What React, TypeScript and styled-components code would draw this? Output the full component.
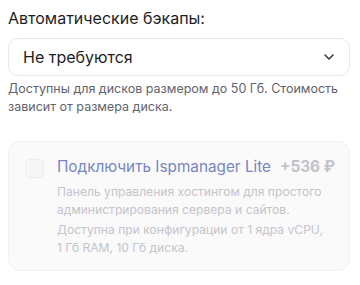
import React from "react";
import styled, { createGlobalStyle } from "styled-components";

const Global = createGlobalStyle`
  body { margin: 0; background: #fff; font-family: Inter, "Noto Sans", sans-serif; }
  * { box-sizing: border-box; }
`;

const Page = styled.div`
  padding: 8px 10px 8px 8px;
  display: flex;
  flex-direction: column;
`;

const Label = styled.div`
  font-size: 16px;
  line-height: 20px;
  color: #1d1d24;
`;

const Select = styled.div`
  margin-top: 10px;
  height: 38px;
  border: 1px solid #e6e6ec;
  border-radius: 10px;
  display: flex;
  align-items: center;
  justify-content: space-between;
  padding: 0 14px 0 14px;
  font-size: 16px;
  color: #1d1d24;
`;

const Hint = styled.div`
  margin-top: 4px;
  font-size: 12.5px;
  line-height: 18px;
  color: #62626e;
`;

const Card = styled.div`
  margin-top: 25px;
  border: 1px solid #f0f0f6;
  background: #fafafb;
  border-radius: 12px;
  padding: 15px 14px 13px 16px;
  display: flex;
  gap: 13px;
`;

const Check = styled.div`
  width: 19px;
  height: 19px;
  border: 1px solid #ececf1;
  border-radius: 4px;
  background: #f6f6f8;
  flex: none;
  margin-top: 2px;
`;

const Body = styled.div`
  display: flex;
  flex-direction: column;
  flex: 1;
`;

const TitleRow = styled.div`
  display: flex;
  justify-content: space-between;
  align-items: center;
  font-size: 15.3px;
  line-height: 20px;
`;

const Title = styled.span`
  color: #7885c0;
`;

const Price = styled.span`
  color: #c2c2c8;
  font-weight: 700;
`;

const Desc = styled.p<{ $first?: boolean }>`
  margin: ${(p) => (p.$first ? "6px" : "2px")} 0 0;
  padding-right: 10px;
  font-size: 12.1px;
  line-height: 18px;
  color: #c4c4ca;
  font-feature-settings: "pnum";
`;

export default function App() {
  return (
    <>
      <Global />
      <Page>
        <Label>Автоматические бэкапы:</Label>
        <Select>
          <span>Не требуются</span>
          <svg width="12" height="8" viewBox="0 0 12 8" fill="none">
            <path d="M2 2l4 4 4-4" stroke="#3a3a44" strokeWidth="1.6" strokeLinecap="round" strokeLinejoin="round" />
          </svg>
        </Select>
        <Hint>Доступны для дисков размером до 50 Гб. Стоимость зависит от размера диска.</Hint>
        <Card>
          <Check />
          <Body>
            <TitleRow>
              <Title>Подключить Ispmanager Lite</Title>
              <Price>+536 ₽</Price>
            </TitleRow>
            <Desc $first>Панель управления хостингом для простого администрирования сервера и сайтов.</Desc>
            <Desc>Доступна при конфигурации от 1 ядра vCPU, 1 Гб RAM, 10 Гб диска.</Desc>
          </Body>
        </Card>
      </Page>
    </>
  );
}
